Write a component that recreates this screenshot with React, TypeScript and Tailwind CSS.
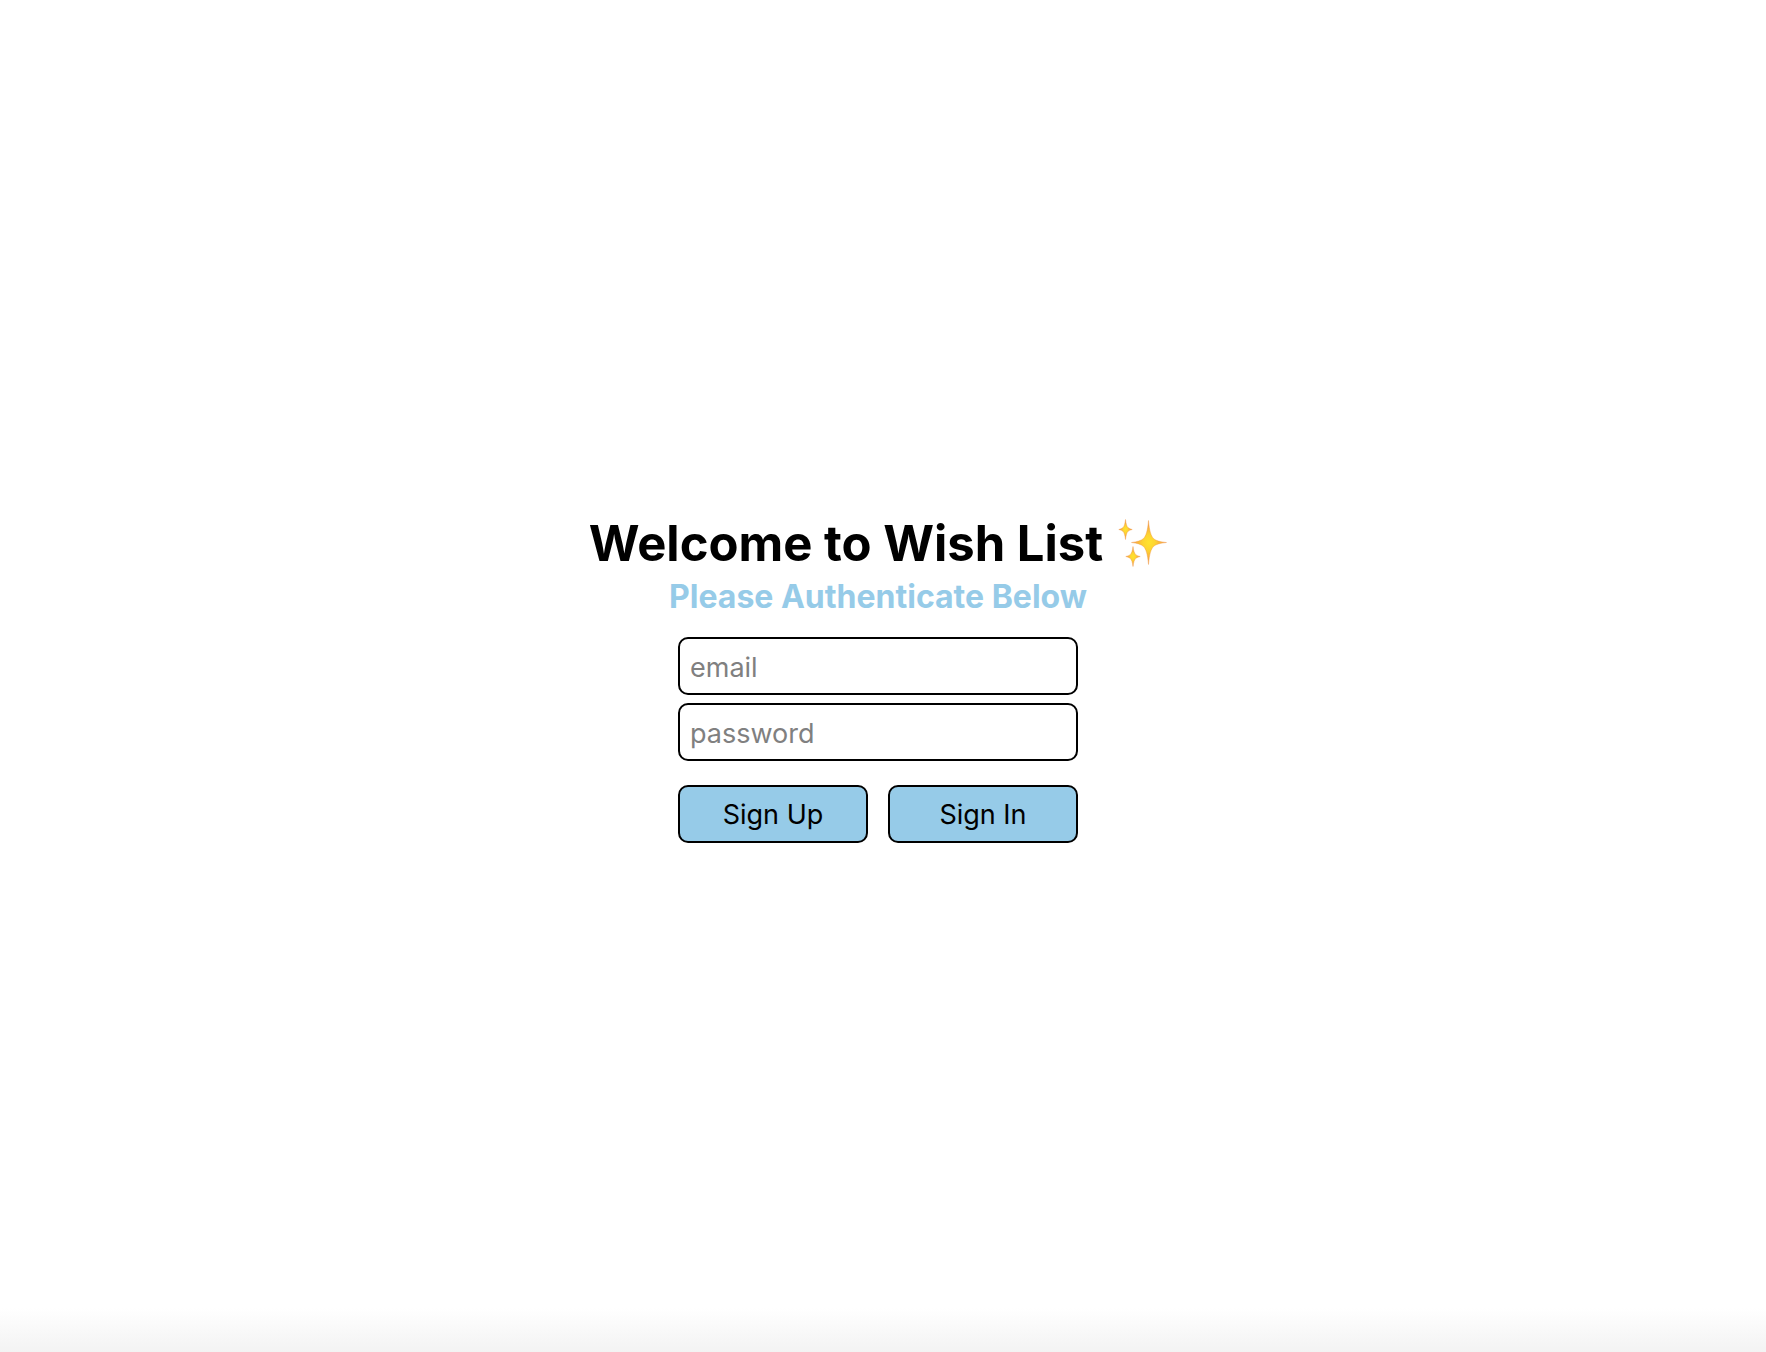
function Sparkles() {
  return (
    <svg viewBox="0 1 50 50" className="h-[50px] w-[50px] shrink-0" role="img" aria-label="sparkles">
      <defs>
        <radialGradient id="spark">
          <stop offset="0" stopColor="#ffe32e" />
          <stop offset="0.35" stopColor="#fdd432" />
          <stop offset="0.65" stopColor="#f9b53c" />
          <stop offset="1" stopColor="#f0a060" />
        </radialGradient>
      </defs>
      <g fill="url(#spark)" stroke="#f0953f" strokeOpacity="0.6" strokeWidth="0.7" strokeLinejoin="round">
        <path d="M31.500 2.500C32.400 13 34 18 36.500 20.500C39 22.800 43 23.800 49.500 24.500C43 25.200 39 26.200 36.500 28.500C34 31 32.400 36 31.500 46.500C30.600 36 29 31 26.500 28.500C24 26.200 20 25.200 14.500 24.500C20 23.800 24 22.800 26.500 20.500C29 18 30.600 13 31.500 2.500Z" />
        <path d="M8.500 1.500C9 6 9.800 8.500 11 9.600C12 10.500 13 11 15.200 11.500C13 12 12 12.500 11 13.400C9.800 14.500 9 17 8.500 21.500C8 17 7.200 14.500 6 13.400C5 12.500 4 12 1.800 11.500C4 11 5 10.500 6 9.600C7.200 8.500 8 6 8.500 1.500Z" />
        <path d="M16 28.500C16.500 32.500 17.400 35.300 18.600 36.400C19.600 37.300 21 38 23.200 38.500C21 39 19.600 39.700 18.600 40.600C17.400 41.700 16.500 44.500 16 48.500C15.500 44.500 14.600 41.700 13.400 40.600C12.400 39.700 11 39 8.800 38.500C11 38 12.400 37.300 13.400 36.400C14.600 35.300 15.500 32.500 16 28.500Z" />
      </g>
    </svg>
  );
}

const field =
  "h-[58px] w-full rounded-[10px] border-2 border-black bg-white px-[10px] pt-0.5 text-[27px] text-black outline-none placeholder:text-[#808080]";
const action =
  "h-[58px] flex-1 rounded-[10px] border-2 border-black bg-[#96cbe8] pt-0.5 text-center text-[27px] text-black";

export default function App() {
  return (
    <div className="flex min-h-screen flex-col bg-white bg-linear-to-t from-[#f3f3f3] to-white to-[44px] font-['Inter',sans-serif]">
      <main className="flex flex-1 flex-col items-center justify-center pt-[5px] pr-[10px]">
        <h1 className="flex items-center gap-[14px] text-[49px] leading-[60px] font-bold text-black">
          Welcome to Wish List
          <Sparkles />
        </h1>
        <h2 className="mt-1 text-[32px] leading-[38px] font-bold text-[#96cbe8]">Please Authenticate Below</h2>
        <form className="mt-[21px] flex w-full max-w-[410px] flex-col gap-2 px-[5px]" onSubmit={(e) => e.preventDefault()}>
          <input className={field} type="email" placeholder="email" aria-label="email" />
          <input className={field} type="password" placeholder="password" aria-label="password" />
          <div className="mt-4 flex gap-5">
            <button type="button" className={action}>Sign Up</button>
            <button type="submit" className={action}>Sign In</button>
          </div>
        </form>
      </main>
    </div>
  );
}
